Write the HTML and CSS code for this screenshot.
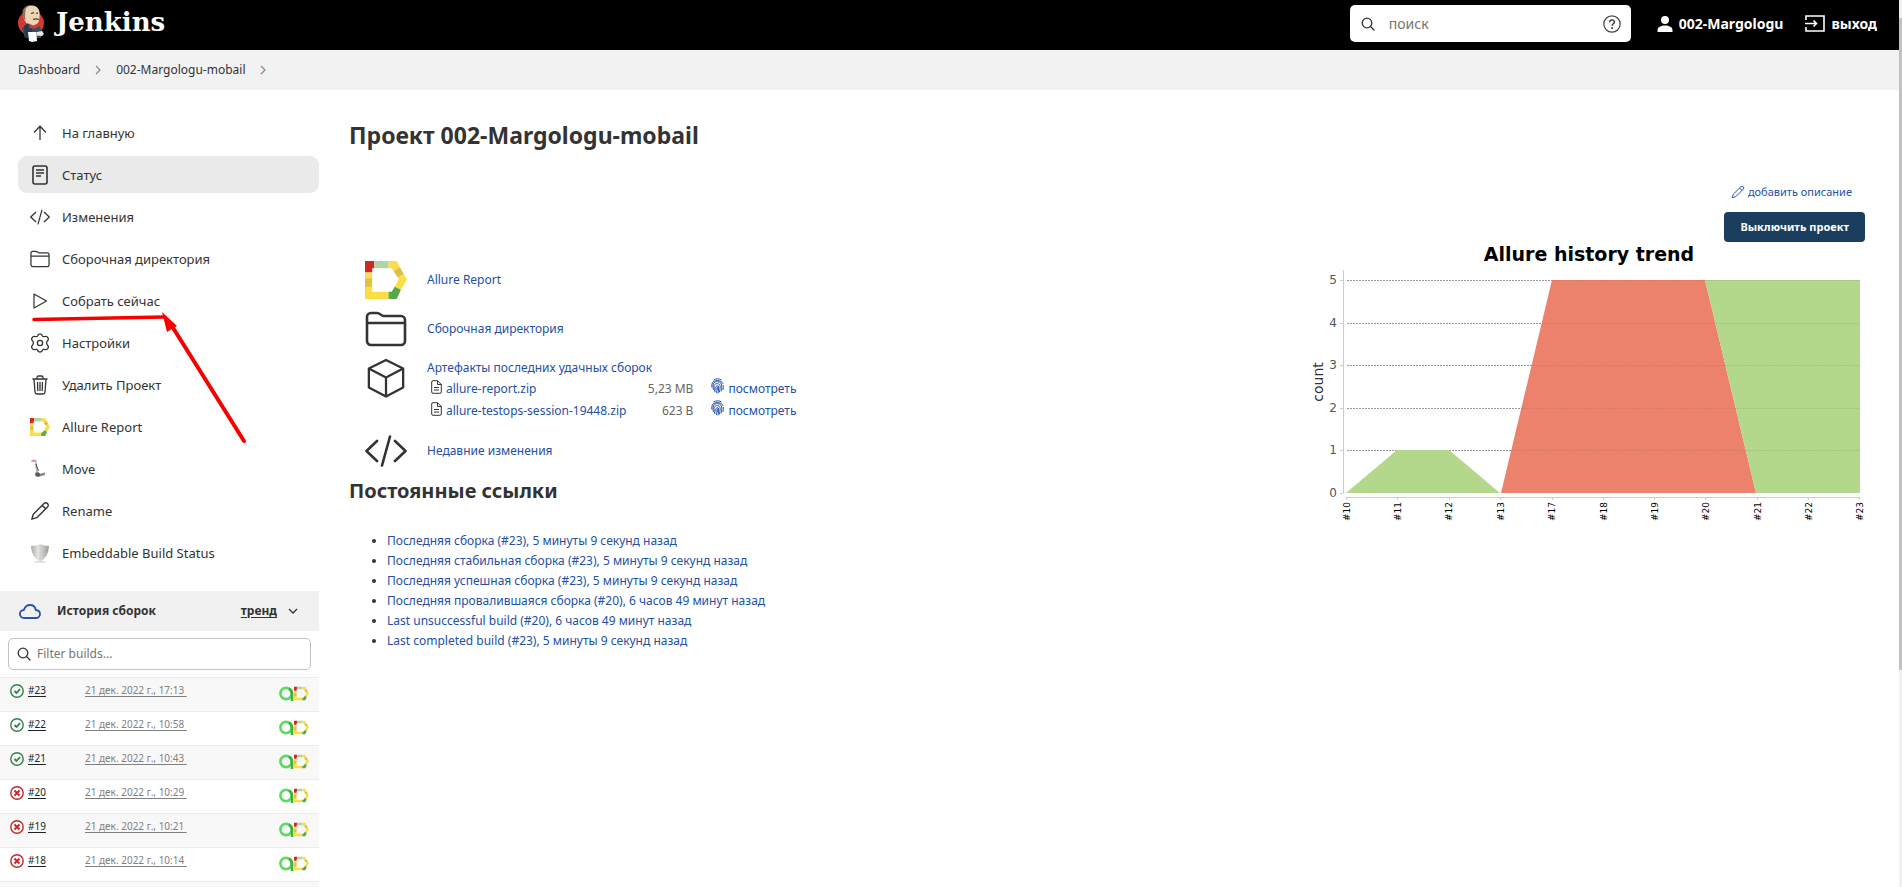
FILE: index.html
```html
<!DOCTYPE html>
<html lang="ru">
<head>
<meta charset="utf-8">
<title>002-Margologu-mobail [Jenkins]</title>
<link rel="stylesheet" href="styles.css">
</head>
<body>
<svg class="defs" aria-hidden="true">
  <symbol id="i-search" viewBox="0 0 14 14"><g fill="none" stroke="currentColor" stroke-width="1.3" stroke-linecap="round"><circle cx="6" cy="6" r="4.8"/><path d="M9.5 9.5L13 13"/></g></symbol>
  <symbol id="i-folder" viewBox="0 0 42 36"><g fill="none" stroke="currentColor" stroke-width="var(--w)" stroke-linejoin="round"><path d="M2 6a4 4 0 0 1 4-4h6c3 0 4 3 7 3h17a4 4 0 0 1 4 4v21a4 4 0 0 1-4 4H6a4 4 0 0 1-4-4zM2 12h38"/></g></symbol>
  <symbol id="i-code" viewBox="0 0 42 32"><path d="M12 6L1.500 16 12 26M30 6l10.500 10L30 26M25 1.500L17 30.500" fill="none" stroke="currentColor" stroke-width="var(--w)" stroke-linecap="round" stroke-linejoin="round"/></symbol>
  <symbol id="i-pencil" viewBox="0 0 20 20"><path d="M1.800 18.200l1.500-5L14 2.500a2.400 2.400 0 0 1 3.500 3.500L6.800 16.700zM12.200 4.300l3.500 3.500" fill="none" stroke="currentColor" stroke-width="1.400" stroke-linejoin="round"/></symbol>
  <symbol id="i-allure" viewBox="0 0 41 37">
    <path d="M0 11h7v8H0z" fill="#fddb5b"/><path d="M0 17h7v9H0z" fill="#dfc345"/><path d="M0 25h7v5h16v7H0z" fill="#fbdd44"/>
    <path d="M0 0h9v7H7v4H0z" fill="#d0281f"/><path d="M9 0h14v7H9z" fill="#b4d2a5"/>
    <path d="M23 0h8l3 6-6 4-2-3h-3z" fill="#fbdd4c"/><path d="M34 6l4 7-6 3-4-6z" fill="#dcc043"/><path d="M38 13l3 5-6 10-6-3 4-7-1-2z" fill="#fbdd44"/><path d="M29 25l6 3-4 9h-8v-7h3z" fill="#58a946"/>
  </symbol>
  <symbol id="i-testops" viewBox="0 0 15 15"><circle cx="7" cy="7.500" r="5.600" fill="none" stroke="#5bdc61" stroke-width="2.600"/><path d="M10 2.500c2 1.200 3 3 3 5V15" fill="none" stroke="#3fae46" stroke-width="2.600"/></symbol>
  <symbol id="i-doc" viewBox="0 0 11 14"><path d="M.7 2a1.300 1.300 0 0 1 1.300-1.300h4.500l3.800 3.800V12a1.300 1.300 0 0 1-1.300 1.300H2A1.300 1.300 0 0 1 .7 12zM6.500.7v3.800h3.800M3 7.500h5M3 10h5" fill="none" stroke="#333" stroke-width="1"/></symbol>
  <symbol id="i-finger" viewBox="0 0 13 16"><g fill="none" stroke="currentColor" stroke-width="1" stroke-linecap="round"><path d="M3 1.800C5 .4 8.200.4 10.200 1.800M1 5.200C2.500 1.800 10 1.200 12 5.500M.8 9c-.4-2 .2-3 .8-3.500M12.300 7.500c.1 2 0 3-.3 4M2.300 11.500C1 4 4 3.700 6.500 3.700c3 0 4.600 2 4.300 5.800 0 1.500-.3 2.500-.6 3.500M3.800 13.500C3 10 2.800 8.500 3.200 7.500c1-2.800 6-2.500 6 1 0 2-.3 4-.8 5.500M5.500 14.500C5 12 4.700 10 4.900 8.800c.5-1.700 2.900-1.500 2.800.2 0 2-.2 4-.7 6M6.300 9v3"/></g></symbol>
  <symbol id="i-ok" viewBox="0 0 14 14"><circle cx="7" cy="7" r="6.200" fill="none" stroke="#32804a" stroke-width="1.400"/><path d="M4.500 7l2 2 3.500-3.800" fill="none" stroke="#32804a" stroke-width="1.800"/></symbol>
  <symbol id="i-fail" viewBox="0 0 14 14"><circle cx="7" cy="7" r="6.200" fill="none" stroke="#c3262d" stroke-width="1.400"/><path d="M4.500 4.500l5 5M9.500 4.500l-5 5" fill="none" stroke="#c3262d" stroke-width="1.900"/></symbol>
  <symbol id="i-chev" viewBox="0 0 6 10"><path d="M1 1l4 4-4 4" fill="none" stroke="currentColor" stroke-width="1.200"/></symbol>
</svg>

<div class="page">
<header class="header">
  <a class="logo" href="#">
    <svg class="butler" viewBox="0 0 26 37" aria-hidden="true">
      <ellipse cx="13" cy="18" rx="13" ry="12.500" fill="#d33833"/>
      <path d="M5 10C4 2 10 .3 14 .5c6 .3 8.500 5 7.500 11 0 5-2 9-6 9.500-5 .3-9-3-10.500-11z" fill="#eed6b5"/>
      <path d="M5 11C3 4 8 0 13 .3c-4 1-5 3-5.500 5L7 12l1 3-2-1z" fill="#85766a"/>
      <path d="M13 8.500l3-.8M18 8l2 .4M15 14.500c2-1 4-.8 6 0" stroke="#4d3b30" stroke-width="1.200" fill="none"/>
      <path d="M4 23l7-4 5 5 5-3 4 6-2 6H7z" fill="#335061"/><path d="M6 21l4-3 4 6-1 9H7z" fill="#263b4d"/>
      <path d="M11 18.500l4 2 5-2v4.500l-4-1-4.500 1.500z" fill="#d33833"/>
      <path d="M10 27h8.500l.5 9-5 1-3-1z" fill="#fff"/><path d="M19 27l5-1 2 3-2 2-5-.5z" fill="#e8e8e8"/>
    </svg>
    <span class="wordmark">Jenkins</span>
  </a>
  <form class="search" role="search">
    <svg class="ic-14" aria-hidden="true"><use href="#i-search"/></svg>
    <input class="search-input" type="search" aria-label="поиск" placeholder="поиск">
    <a class="help" href="#" aria-label="Справка"><svg viewBox="0 0 18 18"><circle cx="9" cy="9" r="8.200" fill="none" stroke="#444" stroke-width="1.200"/><path d="M6.700 7.200c0-3 4.700-3 4.700-.2 0 1.800-2.300 1.800-2.300 3.800" fill="none" stroke="#333" stroke-width="1.400"/><circle cx="9.100" cy="13" r="1" fill="#333"/></svg></a>
  </form>
  <a class="user" href="#"><svg class="ic-user" viewBox="0 0 15 16" aria-hidden="true"><circle cx="7.500" cy="4" r="4" fill="#fff"/><path d="M0 16v-2c0-3 3.500-4.500 7.500-4.500S15 11 15 14v2z" fill="#fff"/></svg>002-Margologu</a>
  <a class="user logout" href="#"><svg class="ic-out" viewBox="0 0 20 17" aria-hidden="true"><path d="M1 5V1h18v15H1v-4M0 8.500h11M8.500 5.500l3 3-3 3" fill="none" stroke="#fff" stroke-width="1.600"/></svg>выход</a>
</header>

<nav class="crumbs">
  <a href="#">Dashboard</a><svg class="chev" aria-hidden="true"><use href="#i-chev"/></svg>
  <a href="#">002-Margologu-mobail</a><svg class="chev" aria-hidden="true"><use href="#i-chev"/></svg>
</nav>

<div class="body">
  <aside class="side">
    <nav class="tasks">
      <a class="task" href="#"><svg class="ic" viewBox="0 0 20 20"><path d="M10 17V3.500M4 9.500l6-6.200 6 6.200" fill="none" stroke="currentColor" stroke-width="1.300"/></svg>На главную</a>
      <a class="task active" href="#"><svg class="ic" viewBox="0 0 20 20"><rect x="3" y="1" width="14" height="18" rx="2" fill="none" stroke="currentColor" stroke-width="1.600"/><path d="M6 5h8M6 8h8M6 11h5" stroke="currentColor" stroke-width="1.400"/></svg>Статус</a>
      <a class="task" href="#"><svg class="ic thin"><use href="#i-code"/></svg>Изменения</a>
      <a class="task" href="#"><svg class="ic thin"><use href="#i-folder"/></svg>Сборочная директория</a>
      <a class="task" href="#"><svg class="ic" viewBox="0 0 20 20"><path d="M4 3v14L16.500 10z" fill="none" stroke="currentColor" stroke-width="1.200" stroke-linejoin="round"/></svg>Собрать сейчас</a>
      <a class="task" href="#"><svg class="ic" viewBox="0 0 20 20"><g fill="none" stroke="currentColor" stroke-width="1.300" stroke-linejoin="round"><path d="M7.500 3Q8 .8 10 .8T12.500 3q.5 1 2 .6 2.500-.8 3.500 1.200t-.8 3.400q-1.400 1.800 0 3.600 1.800 1.400.8 3.400t-3.500 1.200q-1.500-.4-2 .6-.5 2.200-2.500 2.200T7.500 17q-.5-1-2-.6Q3 17.200 2 15.200t.8-3.400q1.400-1.800 0-3.600Q1 6.800 2 4.800t3.500-1.200q1.500.4 2-.6z"/><circle cx="10" cy="10" r="2.600"/></g></svg>Настройки</a>
      <a class="task" href="#"><svg class="ic" viewBox="0 0 20 20"><path d="M2.500 4h15M7 4V2.500Q7 1 8.500 1h3Q13 1 13 2.500V4M4 4l1 13q.2 2 2 2h6q1.800 0 2-2l1-13M7.500 7l.3 9M10 7v9M12.500 7l-.3 9" fill="none" stroke="currentColor" stroke-width="1.300"/></svg>Удалить Проект</a>
      <a class="task" href="#"><svg class="ic"><use href="#i-allure"/></svg>Allure Report</a>
      <a class="task" href="#"><svg class="ic" viewBox="0 0 20 20"><path d="M3 2.500l2.500-1L7 14" fill="none" stroke="#bbb" stroke-width="1.800"/><path d="M1.500 2.500l3-1.500" stroke="#d66" stroke-width="1.300"/><path d="M5 14l3-1.500L9 15l6-1.500v2.500L8 18l-3-1z" fill="#888"/><circle cx="8" cy="15.500" r="2" fill="#555"/><path d="M6 5l2.500 7" stroke="#444" stroke-width="1"/></svg>Move</a>
      <a class="task" href="#"><svg class="ic"><use href="#i-pencil"/></svg>Rename</a>
      <a class="task" href="#"><svg class="ic" viewBox="0 0 20 20"><defs><linearGradient id="sh"><stop offset="0" stop-color="#aaa"/><stop offset=".4" stop-color="#e6e6e3"/><stop offset="1" stop-color="#999"/></linearGradient></defs><ellipse cx="10" cy="18.800" rx="6" ry="1" fill="#ddd"/><path d="M1 3q5 0 9-2 4 2 9 2-.3 11-9 15.500Q1.300 14 1 3z" fill="url(#sh)"/><path d="M10 3v13" stroke="#bbb" stroke-dasharray="1 2"/></svg>Embeddable Build Status</a>
    </nav>
    <section class="history">
      <div class="history-head">
        <svg class="cloud" viewBox="0 0 22 15" aria-hidden="true"><path d="M5 14a4 4 0 0 1-.2-8C6 2.500 8.500 1 11 1c3.200 0 5.300 2 5.800 5 2.500.2 4.200 2 4.200 4s-1.700 4-4.200 4z" fill="none" stroke="#2b51ae" stroke-width="1.800"/></svg>
        <h2 class="history-title">История сборок</h2>
        <a class="trend" href="#">тренд</a>
        <svg class="chev-down" viewBox="0 0 10 6" aria-hidden="true"><path d="M1 1l4 4 4-4" fill="none" stroke="#333" stroke-width="1.300"/></svg>
      </div>
      <div class="filter">
        <svg class="ic-14" aria-hidden="true"><use href="#i-search"/></svg>
        <input class="filter-input" type="text" aria-label="Filter builds" placeholder="Filter builds...">
      </div>
      <table class="builds"><tbody>
        <tr><td class="num"><svg><use href="#i-ok"/></svg><a href="#">#23</a></td><td class="date"><a href="#">21 дек. 2022 г., 17:13&nbsp;</a></td><td class="badges"><svg class="ops"><use href="#i-testops"/></svg><svg class="all"><use href="#i-allure"/></svg></td></tr>
        <tr><td class="num"><svg><use href="#i-ok"/></svg><a href="#">#22</a></td><td class="date"><a href="#">21 дек. 2022 г., 10:58&nbsp;</a></td><td class="badges"><svg class="ops"><use href="#i-testops"/></svg><svg class="all"><use href="#i-allure"/></svg></td></tr>
        <tr><td class="num"><svg><use href="#i-ok"/></svg><a href="#">#21</a></td><td class="date"><a href="#">21 дек. 2022 г., 10:43&nbsp;</a></td><td class="badges"><svg class="ops"><use href="#i-testops"/></svg><svg class="all"><use href="#i-allure"/></svg></td></tr>
        <tr><td class="num"><svg><use href="#i-fail"/></svg><a href="#">#20</a></td><td class="date"><a href="#">21 дек. 2022 г., 10:29&nbsp;</a></td><td class="badges"><svg class="ops"><use href="#i-testops"/></svg><svg class="all"><use href="#i-allure"/></svg></td></tr>
        <tr><td class="num"><svg><use href="#i-fail"/></svg><a href="#">#19</a></td><td class="date"><a href="#">21 дек. 2022 г., 10:21&nbsp;</a></td><td class="badges"><svg class="ops"><use href="#i-testops"/></svg><svg class="all"><use href="#i-allure"/></svg></td></tr>
        <tr><td class="num"><svg><use href="#i-fail"/></svg><a href="#">#18</a></td><td class="date"><a href="#">21 дек. 2022 г., 10:14&nbsp;</a></td><td class="badges"><svg class="ops"><use href="#i-testops"/></svg><svg class="all"><use href="#i-allure"/></svg></td></tr>
        <tr><td class="num"></td><td class="date"></td><td class="badges"></td></tr>
      </tbody></table>
    </section>
  </aside>

  <main class="main">
    <div class="content">
      <h1 class="title">Проект 002-Margologu-mobail</h1>
      <div class="summary">
        <svg class="big" aria-hidden="true"><use href="#i-allure"/></svg>
        <a href="#">Allure Report</a>
        <svg class="big thick" aria-hidden="true"><use href="#i-folder"/></svg>
        <a href="#">Сборочная директория</a>
        <svg class="big cube" viewBox="0 0 42 42" aria-hidden="true"><path d="M21 2L39 11v20l-18 9.500L3 31V11zM3 11l18 9.500L39 11M21 20.500V40" fill="none" stroke="currentColor" stroke-width="2.400" stroke-linejoin="round"/></svg>
        <div class="artifacts">
          <a href="#">Артефакты последних удачных сборок</a>
          <table class="files"><tbody>
            <tr><td class="f-icon"><svg><use href="#i-doc"/></svg></td><td class="f-name"><a href="#">allure-report.zip</a></td><td class="f-size">5,23 MB</td><td class="f-finger"><a href="#" aria-label="Отпечаток"><svg><use href="#i-finger"/></svg></a></td><td><a href="#">посмотреть</a></td></tr>
            <tr><td class="f-icon"><svg><use href="#i-doc"/></svg></td><td class="f-name"><a href="#">allure-testops-session-19448.zip</a></td><td class="f-size">623 B</td><td class="f-finger"><a href="#" aria-label="Отпечаток"><svg><use href="#i-finger"/></svg></a></td><td><a href="#">посмотреть</a></td></tr>
          </tbody></table>
        </div>
        <svg class="big thick" aria-hidden="true"><use href="#i-code"/></svg>
        <a href="#">Недавние изменения</a>
      </div>
      <h2 class="subtitle">Постоянные ссылки</h2>
      <ul class="links">
        <li><a href="#">Последняя сборка (#23), 5 минуты 9 секунд назад</a></li>
        <li><a href="#">Последняя стабильная сборка (#23), 5 минуты 9 секунд назад</a></li>
        <li><a href="#">Последняя успешная сборка (#23), 5 минуты 9 секунд назад</a></li>
        <li><a href="#">Последняя провалившаяся сборка (#20), 6 часов 49 минут назад</a></li>
        <li><a href="#">Last unsuccessful build (#20), 6 часов 49 минут назад</a></li>
        <li><a href="#">Last completed build (#23), 5 минуты 9 секунд назад</a></li>
      </ul>
    </div>
    <div class="panel">
      <a class="describe" href="#"><svg class="ic-14" aria-hidden="true"><use href="#i-pencil"/></svg>добавить описание</a>
      <button class="disable" type="button">Выключить проект</button>
      <svg class="chart" viewBox="0 0 556 288" role="img" aria-label="Allure history trend">
        <text class="c-title" x="280" y="19">Allure history trend</text>
        <g class="c-grid"><path d="M38 38.500h513M38 81.500h513M38 123.500h513M38 166.500h513M38 208.500h513"/></g>
        <path class="c-green" d="M37 251L88 208h52l51 43z"/>
        <path class="c-red" d="M192 251L243 38h153l51 213z"/>
        <path class="c-green" d="M396 38h155v213H447z"/>
        <g class="c-grid over"><path d="M243 38.500h308M233 81.500h318M222 123.500h329M212 166.500h339M202 208.500h349"/></g>
        <path class="c-axis" d="M34.500 28v223.500M31 38.500h3M31 81.500h3M31 123.500h3M31 166.500h3M31 208.500h3M31 251.500h3M37 255.500h514M37.500 256v2M88.500 256v2M140.500 256v2M191.500 256v2M243.500 256v2M294.500 256v2M345.500 256v2M396.500 256v2M448.500 256v2M499.500 256v2M550.500 256v2"/>
        <g class="c-y"><text x="28" y="42">5</text><text x="28" y="85">4</text><text x="28" y="127">3</text><text x="28" y="170">2</text><text x="28" y="212">1</text><text x="28" y="255">0</text></g>
        <text class="c-label" transform="translate(14 140) rotate(-90)">count</text>
        <g class="c-x">
          <text transform="translate(41 260) rotate(-90)">#10</text><text transform="translate(92 260) rotate(-90)">#11</text><text transform="translate(143 260) rotate(-90)">#12</text><text transform="translate(195 260) rotate(-90)">#13</text><text transform="translate(246 260) rotate(-90)">#17</text><text transform="translate(298 260) rotate(-90)">#18</text><text transform="translate(349 260) rotate(-90)">#19</text><text transform="translate(400 260) rotate(-90)">#20</text><text transform="translate(452 260) rotate(-90)">#21</text><text transform="translate(503 260) rotate(-90)">#22</text><text transform="translate(554 260) rotate(-90)">#23</text>
        </g>
      </svg>
    </div>
  </main>
</div>
</div>
<div class="scrollbar"><div class="thumb"></div></div>
<svg class="arrow" viewBox="0 0 220 140" aria-hidden="true"><path d="M4 9.500L134 7" stroke="#f60000" stroke-width="3.500" stroke-linecap="round"/><path d="M140 13l74 118" stroke="#f60000" stroke-width="4" stroke-linecap="round"/><path d="M132 2l15 14-5 3-5 3z" fill="#f60000"/></svg>
</body>
</html>
```
FILE: styles.css
```css
* { box-sizing: border-box; }
body {
  margin: 0;
  height: 100vh;
  display: flex;
  overflow: hidden;
  background: #fff;
  color: #333;
  font: 13px/20px "Noto Sans", "Open Sans", sans-serif;
}
a { color: #2450a4; text-decoration: none; }
.defs { position: absolute; width: 0; height: 0; }
.page { flex: 1; min-width: 0; height: 100vh; overflow: hidden; display: flex; flex-direction: column; }
.ic-14 { width: 14px; height: 14px; flex: none; }

.header { flex: none; display: flex; align-items: center; height: 50px; background: #000; padding: 0 22px 3px 18px; }
.logo { display: flex; align-items: center; gap: 12px; margin-right: auto; }
.butler { width: 26px; height: 37px; }
.wordmark { color: #fff; font: bold 26px/36px "DejaVu Serif", "Liberation Serif", serif; padding-bottom: 4px; }
.search { display: flex; align-items: center; gap: 14px; width: 281px; height: 37px; margin-right: 26px; padding: 0 10px 0 11px; background: #fff; border-radius: 5px; color: #333; }
.search-input { flex: 1; min-width: 0; border: 0; outline: 0; padding: 0; background: none; font: 14px/20px "Noto Sans", sans-serif; }
.search-input::placeholder { color: #757575; }
.help, .help svg { display: block; width: 18px; height: 18px; }
.user { display: flex; align-items: center; gap: 6px; color: #fff; font-size: 14px; font-weight: 700; }
.logout { margin-left: 22px; }
.ic-user { width: 16px; height: 16px; }
.ic-out { width: 20px; height: 17px; }

.crumbs { flex: none; display: flex; align-items: center; height: 40px; padding: 0 18px; background: #f2f2f2; font-size: 12px; }
.crumbs a { color: #333; }
.chev { width: 6px; height: 10px; margin: 0 15px; color: #888; }

.body { flex: 1; min-height: 0; display: flex; }
.side { flex: none; width: 319px; }
.tasks { display: flex; flex-direction: column; gap: 5px; padding: 24px 0 0 18px; }
.task { display: flex; align-items: center; gap: 12px; height: 37px; padding-left: 12px; border-radius: 9px; color: #333; font-size: 13px; }
.task.active { background: #eaeaea; }
.ic { width: 20px; height: 20px; flex: none; }
.thin, .thick { --w: 2.6; }

.history { margin-top: 20px; }
.history-head { display: flex; align-items: center; height: 40px; padding: 0 21px 0 19px; background: #f1f1f1; }
.cloud { width: 22px; height: 15px; }
.history-title { margin: 0 auto 0 16px; font-size: 12px; line-height: 20px; }
.trend { color: #333; font-size: 12px; font-weight: 700; text-decoration: underline; text-underline-offset: 2px; }
.chev-down { width: 10px; height: 6px; margin-left: 11px; }
.filter { display: flex; align-items: center; gap: 6px; height: 32px; margin: 7px 8px; padding: 0 8px; border: 1px solid #bfc3c7; border-radius: 5px; }
.filter-input { flex: 1; min-width: 0; border: 0; outline: 0; padding: 0; background: none; font: 12px/20px "Noto Sans", sans-serif; }
.filter-input::placeholder { color: #757575; }
.builds { width: 100%; border-collapse: collapse; font-size: 10px; line-height: 16px; }
.builds tr { height: 34px; border-top: 1px solid #ececec; }
.builds tr:nth-child(odd) { background: #f8f8f8; }
.builds td { padding: 4px 0 0; vertical-align: top; }
.builds a { text-decoration: underline; text-underline-offset: 2px; }
.num { width: 85px; }
.builds .num { padding-left: 10px; }
.num svg { width: 14px; height: 14px; margin-right: 4px; vertical-align: -4px; }
.num a { color: #222; }
.date a { color: #808080; }
.builds .badges { padding: 8px 10px 0 0; text-align: right; font-size: 0; }
.ops, .all { width: 15px; height: 15px; }

.main { flex: 1; min-width: 0; display: flex; padding: 0 34px 0 30px; }
.content { flex: 1; min-width: 0; font-size: 12px; }
.title { margin: 29px 0 109px; font-size: 23px; line-height: 32px; }
.summary { display: grid; grid-template-columns: 42px 1fr; column-gap: 20px; row-gap: 9px; padding-left: 16px; align-items: center; }
.big { width: 42px; height: 40px; }
.cube { align-self: start; }
.artifacts { align-self: start; }
.files { border-collapse: collapse; line-height: 22px; }
.files td { padding: 0; }
.files .f-icon { width: 19px; padding: 2px 0 0 4px; vertical-align: top; }
.f-icon svg { display: block; width: 11px; height: 14px; }
.files .f-name { padding-right: 5px; }
.f-size { color: #666; text-align: right; width: 62px; }
.files .f-finger { padding: 0 4px 0 18px; vertical-align: top; }
.f-finger svg { display: block; width: 13px; height: 16px; }
.subtitle { margin: 6px 0 26px; font-size: 20px; line-height: 28px; }
.links { margin: 0; padding-left: 38px; }

.panel { flex: none; width: 556px; display: flex; flex-direction: column; align-items: flex-end; padding-top: 92px; }
.describe { display: flex; align-items: center; gap: 3px; margin-right: 13px; font-size: 11px; }
.disable { height: 30px; margin-top: 10px; padding: 0 16px; border: 0; border-radius: 4px; background: #1b3e5e; color: #fff; font: 700 11px/20px "Noto Sans", sans-serif; }
.chart { width: 556px; height: 288px; font-family: "DejaVu Sans", sans-serif; }
.c-title { font-size: 19px; font-weight: 700; text-anchor: middle; fill: #000; }
.c-y { font-size: 12px; text-anchor: end; fill: #555; }
.c-x { font-size: 9px; text-anchor: end; fill: #000; }
.c-label { font-size: 14px; text-anchor: middle; fill: #333; }
.c-grid { stroke: #999; stroke-dasharray: 2 1; }
.c-grid.over { stroke: rgba(80, 80, 80, .16); }
.c-axis { fill: none; stroke: #ccc; }
.c-green { fill: #b3d78b; }
.c-red { fill: #ed826c; }

.scrollbar { flex: none; width: 3px; background: #f1f1f1; padding-top: 18px; }
.thumb { height: 75%; background: #c1c1c1; }
.arrow { position: absolute; left: 30px; top: 310px; width: 220px; height: 140px; }
```
